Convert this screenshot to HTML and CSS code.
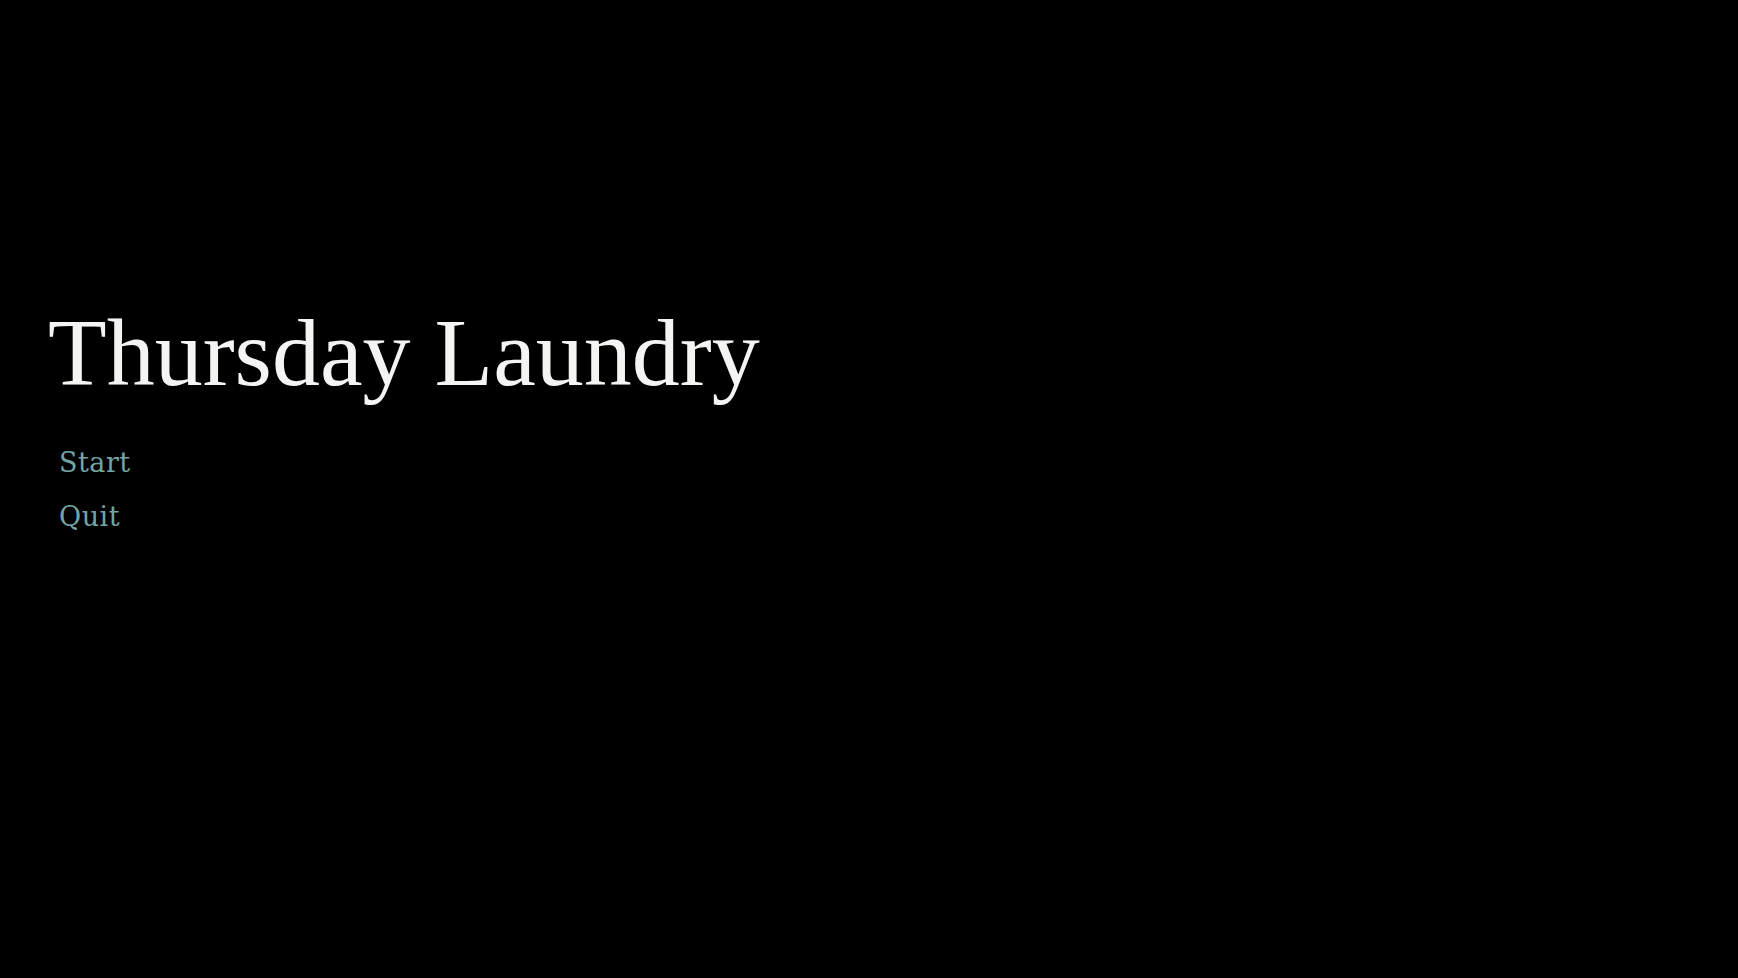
FILE: index.html
```html
<!DOCTYPE html>
<html>
<head>
    <title>Thursday Laundry</title>
    <link rel="stylesheet" href="styles.css">
</head>
<body>
    <div class="title-screen">
        <h1 class="game-title">Thursday Laundry</h1>
        <div class="menu">
            <a class="menu-item" href="#">Start</a>
            <a class="menu-item" href="#">Quit</a>
        </div>
    </div>
</body>
</html>
```

FILE: styles.css
```css
body {
    margin: 0;
    padding: 0;
    background-color: #000000;
    height: 100vh;
    overflow: hidden;
}
.title-screen {
    display: flex;
    flex-direction: column;
    align-items: flex-start;
    padding: 305px 0 0 48px;
}
.game-title {
    font-family: 'Liberation Serif', serif;
    font-weight: normal;
    font-size: 96px;
    line-height: 1;
    letter-spacing: 0;
    color: #f4f4f2;
    margin: 0;
}
.menu {
    display: flex;
    flex-direction: column;
    margin: 35px 0 0 11px;
}
.menu-item {
    font-family: 'DejaVu Serif', serif;
    font-size: 27px;
    line-height: 54px;
    letter-spacing: 0.5px;
    color: #72a4a6;
    text-decoration: none;
}
.menu-item:hover {
    color: #a8d2d4;
}
```
